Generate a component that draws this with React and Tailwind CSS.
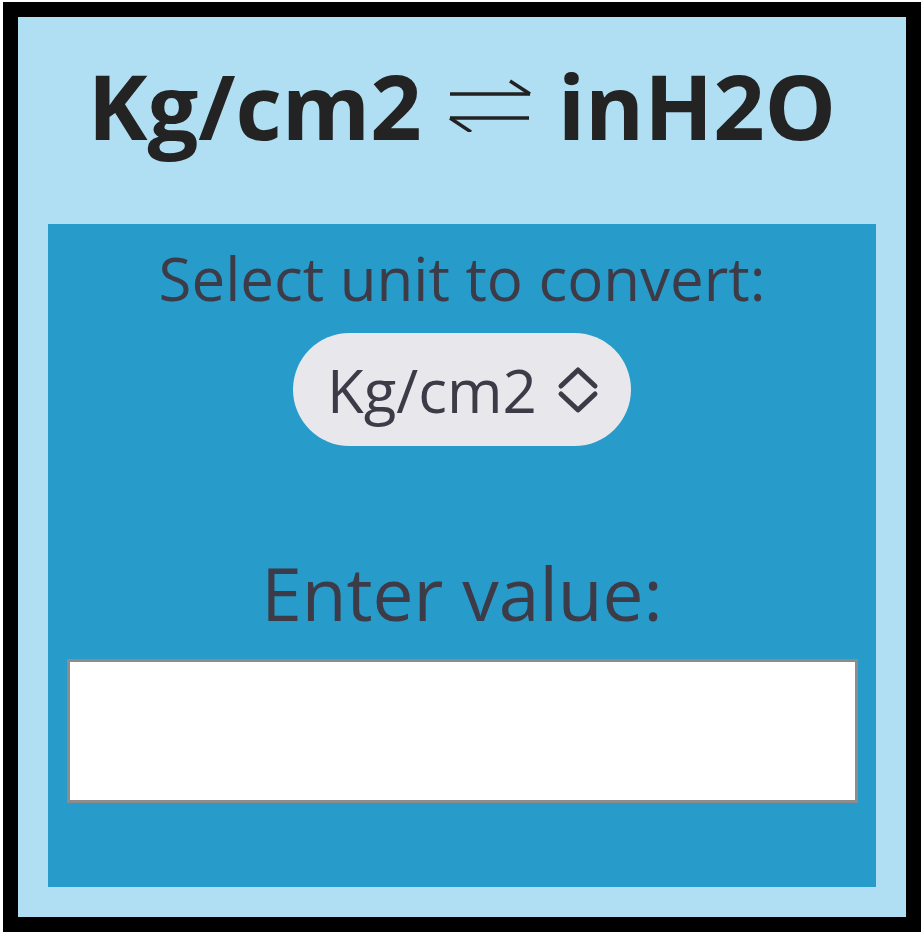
const ArrowsIcon = () => (
  <svg width="84" height="56" viewBox="0 0 84 56" className="mx-[26px] mt-[32px]" fill="none" stroke="#222" strokeWidth="3.4" strokeLinecap="butt">
    <path d="M2 18 H82" />
    <path d="M62 5 L82 18" />
    <path d="M2 42 H81" />
    <path d="M2 42 L23 56" />
  </svg>
)

const ChevronUpDown = () => (
  <svg width="42" height="48" viewBox="0 0 42 48" fill="none" stroke="#3d3b47" strokeWidth="5" strokeLinecap="round" strokeLinejoin="round">
    <path d="M4 20 L21 4 L38 20" />
    <path d="M4 28 L21 44 L38 28" />
  </svg>
)

export default function App() {
  return (
    <div className="w-[921px] h-[937px] bg-white pl-[3px] pt-[2px]" style={{ fontFamily: '"Open Sans", sans-serif' }}>
      <div className="w-[918px] h-[930px] border-[15px] border-black bg-[#b0def2] flex flex-col">
        {/* Title */}
        <div className="h-[207px] flex justify-center items-start pt-[27px]">
          <h1 className="text-[90px] leading-[normal] font-bold text-[#232323] flex items-start">
            <span>Kg/cm2</span>
            <ArrowsIcon />
            <span>inH2O</span>
          </h1>
        </div>

        {/* Converter panel */}
        <div className="mx-[30px] h-[663px] bg-[#279bca] flex flex-col items-center pt-[13px] px-[18px]">
          <p className="text-[60px] leading-[normal] text-[#3d3b47]">Select unit to convert:</p>
          <div className="mt-[14px] h-[113px] w-[338px] rounded-full bg-[#e8e8ec] flex items-center pl-[34px] gap-[20px]">
            <span className="text-[60px] leading-[normal] text-[#3d3b47]">Kg/cm2</span>
            <ChevronUpDown />
          </div>
          <p className="mt-[97px] text-[73px] leading-[normal] text-[#3d3b47]">Enter value:</p>
          <input
            type="text"
            className="mt-[17px] w-[791px] h-[144px] border-[3px] border-[#8c8c8c] bg-white outline-none px-3 text-[40px]"
          />
        </div>
      </div>
    </div>
  )
}
